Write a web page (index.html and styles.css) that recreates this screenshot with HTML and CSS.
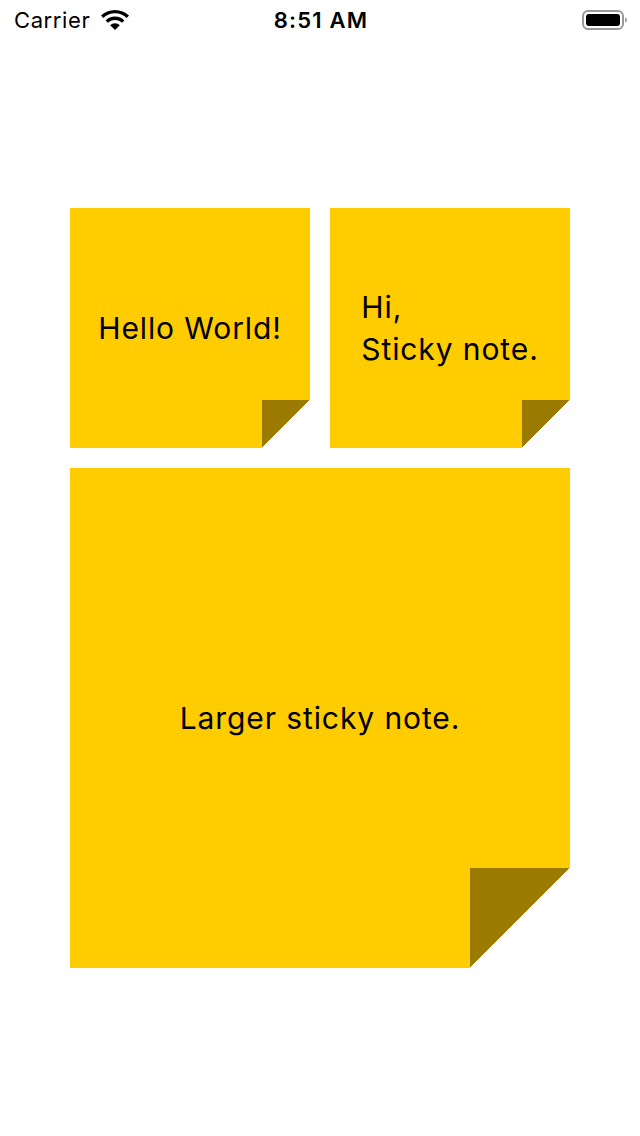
FILE: index.html
```html
<!DOCTYPE html>
<html>
<head>
<meta charset="utf-8">
<link rel="stylesheet" href="styles.css">
</head>
<body>
<div class="status">
  <div class="status-left">
    <span class="carrier">Carrier</span>
    <svg class="wifi" width="32" height="24" viewBox="0 0 32 24">
      <path d="M16 3C10.5 3 5.6 5.1 2 8.6L4.3 11C7.3 8 11.4 6.3 16 6.3S24.7 8 27.7 11L30 8.6C26.4 5.1 21.5 3 16 3Z" fill="#000"/>
      <path d="M16 9.6C12.3 9.6 9 11 6.6 13.4L8.9 15.8C10.7 14 13.2 12.9 16 12.9S21.3 14 23.1 15.8L25.4 13.4C23 11 19.7 9.6 16 9.6Z" fill="#000"/>
      <path d="M16 16.2C14.1 16.2 12.4 17 11.2 18.2L16 23L20.8 18.2C19.6 17 17.9 16.2 16 16.2Z" fill="#000"/>
    </svg>
  </div>
  <div class="time">8:51 AM</div>
  <div class="status-right">
    <svg width="46" height="22" viewBox="0 0 46 22">
      <rect x="1" y="2" width="40" height="18" rx="5" fill="none" stroke="#9a9a9a" stroke-width="2"/>
      <rect x="4" y="5" width="34" height="12" rx="3" fill="#000"/>
      <path d="M43 8.5v5c1.2-.4 2-1.4 2-2.5s-.8-2.1-2-2.5z" fill="#9a9a9a"/>
    </svg>
  </div>
</div>

<main class="board">
  <div class="row">
    <div class="note small">
      <p class="text">Hello World!</p>
      <span class="fold"></span>
    </div>
    <div class="note small">
      <p class="text left">Hi,<br>Sticky note.</p>
      <span class="fold"></span>
    </div>
  </div>
  <div class="note large">
    <p class="text">Larger sticky note.</p>
    <span class="fold"></span>
  </div>
</main>
</body>
</html>
```
FILE: styles.css
```css
* { box-sizing: border-box; }
html, body {
  margin: 0;
  padding: 0;
  background: #fff;
  width: 640px;
  height: 1136px;
  overflow: hidden;
  font-family: Inter, "Liberation Sans", sans-serif;
  color: #000;
}
.status {
  height: 40px;
  display: flex;
  align-items: center;
  justify-content: space-between;
  padding: 0 14px;
  position: relative;
}
.status-left {
  display: flex;
  align-items: center;
  gap: 9px;
  width: 140px;
}
.carrier {
  font-size: 22px;
  letter-spacing: 0.6px;
}
.wifi { margin-top: -2px; }
.time {
  font-size: 22px;
  font-weight: 600;
  letter-spacing: 1.2px;
}
.status-right {
  width: 140px;
  display: flex;
  justify-content: flex-end;
  margin-right: -2px;
}
.board {
  padding: 168px 70px 0;
  display: flex;
  flex-direction: column;
  gap: 20px;
}
.row {
  display: flex;
  gap: 20px;
}
.note {
  position: relative;
  background: #ffcc00;
  display: flex;
  align-items: center;
  justify-content: center;
}
.note.small { width: 240px; height: 240px; }
.note.large { width: 500px; height: 500px; }
.text {
  margin: 0;
  font-size: 30px;
  line-height: 42px;
  letter-spacing: 0.9px;
  text-align: center;
}
.text.left { text-align: left; }
.fold {
  position: absolute;
  right: 0;
  bottom: 0;
  width: 20%;
  height: 20%;
  background: linear-gradient(to bottom right, #9b7a00 50%, #fff 50%);
}
```
